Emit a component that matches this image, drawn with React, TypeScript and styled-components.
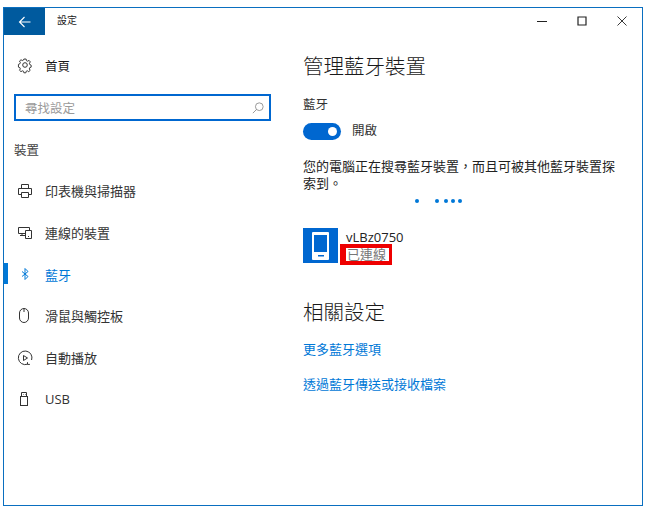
import { FC, ReactNode } from 'react';
import styled, { createGlobalStyle } from 'styled-components';

const GlobalStyle = createGlobalStyle`
  html, body {
    margin: 0;
    padding: 0;
    background: #ffffff;
  }
  body {
    font-family: "Open Sans", "Noto Sans CJK TC", sans-serif;
    color: #1a1a1a;
  }
`;

const Page = styled.div`
  width: 657px;
  height: 514px;
  padding: 7px 0 0 3px;
  box-sizing: border-box;
  overflow: hidden;
`;

const Window = styled.div`
  width: 640px;
  height: 499px;
  box-sizing: border-box;
  border: 1px solid #0a6fc0;
  display: flex;
  flex-direction: column;
`;

const TitleBar = styled.div`
  height: 27px;
  display: flex;
  align-items: center;
  flex-shrink: 0;
`;

const BackButton = styled.div`
  width: 41px;
  height: 27px;
  background: #005a9e;
  display: flex;
  align-items: center;
  justify-content: center;
`;

const TitleText = styled.div`
  margin-left: 12px;
  font-size: 10px;
  line-height: 25px;
  height: 27px;
  flex: 1;
`;

const WindowControls = styled.div`
  display: flex;
  align-items: center;
  gap: 30px;
  padding: 0 15px 2px 0;
`;

const Body = styled.div`
  flex: 1;
  display: flex;
`;

const Sidebar = styled.div`
  width: 299px;
  flex-shrink: 0;
  display: flex;
  flex-direction: column;
`;

const HomeRow = styled.div`
  height: 38px;
  margin-top: 11px;
  display: flex;
  align-items: center;
  padding-left: 12px;
  gap: 11px;
  font-size: 12.5px;
`;

const SearchBox = styled.div`
  margin: 10px 0 0 10px;
  width: 257px;
  height: 27px;
  box-sizing: border-box;
  border: 2px solid #0067d0;
  display: flex;
  align-items: center;
  justify-content: space-between;
  padding: 0 5px 0 9px;
  font-size: 12.5px;
  color: #9a9a9a;
`;

const GroupLabel = styled.div`
  margin: 21px 0 0 10px;
  height: 18px;
  line-height: 18px;
  font-size: 12.5px;
  color: #444444;
`;

const NavList = styled.div`
  margin-top: 10px;
  display: flex;
  flex-direction: column;
`;

const NavRow = styled.div<{ $active?: boolean }>`
  height: 41.7px;
  display: flex;
  align-items: center;
  font-size: 13px;
  color: ${(p) => (p.$active ? '#0078d7' : '#333333')};
  position: relative;
`;

const ActiveMark = styled.div`
  position: absolute;
  left: 0;
  top: 10px;
  width: 4px;
  height: 21px;
  background: #0078d7;
`;

const NavIcon = styled.div`
  width: 41px;
  display: flex;
  justify-content: center;
  align-items: center;
  flex-shrink: 0;
`;

const Content = styled.div`
  flex: 1;
  display: flex;
  flex-direction: column;
  padding-top: 16px;
`;

const Heading = styled.div`
  font-size: 20.5px;
  font-weight: 300;
  line-height: 30px;
  color: #1a1a1a;
`;

const FieldLabel = styled.div`
  margin-top: 15px;
  font-size: 12.5px;
  line-height: 18px;
  color: #333333;
`;

const ToggleRow = styled.div`
  margin-top: 8px;
  display: flex;
  align-items: center;
  gap: 11px;
  font-size: 12.5px;
  line-height: 18px;
  color: #333333;
`;

const ToggleTrack = styled.div`
  width: 38px;
  height: 17px;
  border-radius: 9px;
  background: #0067d0;
  position: relative;
`;

const ToggleKnob = styled.div`
  position: absolute;
  right: 4px;
  top: 4px;
  width: 9px;
  height: 9px;
  border-radius: 50%;
  background: #ffffff;
`;

const Description = styled.div`
  margin-top: 18px;
  width: 317px;
  font-size: 13px;
  line-height: 17px;
  color: #222222;
`;

const ProgressDots = styled.div`
  margin: 6px 0 0 112px;
  height: 5px;
  display: flex;
  align-items: center;
`;

const Dot = styled.span<{ $gap: number }>`
  width: 4px;
  height: 4px;
  border-radius: 50%;
  background: #0078d7;
  margin-right: ${(p) => p.$gap}px;
`;

const DeviceRow = styled.div`
  margin-top: 25px;
  display: flex;
  align-items: flex-start;
  gap: 2px;
`;

const DeviceTile = styled.div`
  width: 35px;
  height: 35px;
  background: #0067d0;
  display: flex;
  align-items: center;
  justify-content: center;
`;

const DeviceInfo = styled.div`
  display: flex;
  flex-direction: column;
  align-items: flex-start;
`;

const DeviceName = styled.div`
  margin-left: 6px;
  font-size: 13px;
  height: 16px;
  line-height: 18px;
  color: #222222;
`;

const DeviceStatus = styled.div`
  border-style: solid;
  border-color: #ee0000;
  border-width: 4px 3px 4px 6px;
  font-size: 13px;
  line-height: 13px;
  height: 13px;
  padding: 0 3px 0 1px;
  color: #777777;
`;

const SectionHeading = styled(Heading)`
  margin-top: 32px;
`;

const TextLink = styled.div<{ $gap: number }>`
  margin-top: ${(p) => p.$gap}px;
  font-size: 13px;
  line-height: 18px;
  color: #0078d7;
`;

const Line: FC<{ children: ReactNode }> = ({ children }) => (
  <svg width={18} height={18} viewBox="0 0 18 18" fill="none" stroke="#333" strokeWidth="1">
    {children}
  </svg>
);

const navItems: { label: string; icon: ReactNode; active?: boolean }[] = [
  {
    label: '印表機與掃描器',
    icon: (
      <Line>
        <path d="M5.5 6.5V2.5h7v4M5 12.5H2.5v-6h13v6H13" />
        <path d="M5.5 10.5h7v5h-7z" />
      </Line>
    ),
  },
  {
    label: '連線的裝置',
    icon: (
      <Line>
        <path d="M9.5 9.5h-7v-6h11v3" />
        <path d="M6 9.5v2M4 11.5h5" />
        <path d="M9.5 6.5h6v8h-6z" />
        <path d="M12 12.5h1" />
      </Line>
    ),
  },
  {
    label: '藍牙',
    active: true,
    icon: (
      <svg width="18" height="18" viewBox="0 0 18 18" fill="none" stroke="#0078d7" strokeWidth="1">
        <path d="M6 6.5l6 5-3 3v-11l3 3-6 5" />
      </svg>
    ),
  },
  {
    label: '滑鼠與觸控板',
    icon: (
      <Line>
        <rect x="3.5" y="1.5" width="9" height="14" rx="4.5" />
        <path d="M8 1.5V5" />
      </Line>
    ),
  },
  {
    label: '自動播放',
    icon: (
      <Line>
        <path d="M11.5 15.2A6.8 6.8 0 1 1 15.6 11" />
        <path d="M7.5 6.5l4 2.5-4 2.5z" />
        <path d="M11.5 13.2v2.2h2.4" />
      </Line>
    ),
  },
  {
    label: 'USB',
    icon: (
      <Line>
        <rect x="4.5" y="6.5" width="7" height="9" />
        <path d="M5.5 6.5v-4h5v4M7 4.5h.5M9 4.5h.5" />
      </Line>
    ),
  },
];

export default function App() {
  return (
    <Page lang="zh-TW">
      <GlobalStyle />
      <Window>
        <TitleBar>
          <BackButton>
            <svg width="14" height="14" viewBox="0 0 14 14" fill="none" stroke="#fff" strokeWidth="1.1">
              <path d="M12.5 7H1.5M6.5 2l-5 5 5 5" />
            </svg>
          </BackButton>
          <TitleText>設定</TitleText>
          <WindowControls>
            <svg width="10" height="10" viewBox="0 0 10 10" fill="none" stroke="#222" strokeWidth="1">
              <path d="M0 5.5h10" />
            </svg>
            <svg width="10" height="10" viewBox="0 0 10 10" fill="none" stroke="#222" strokeWidth="1.2">
              <path d="M1 1h8v8H1z" />
            </svg>
            <svg width="10" height="10" viewBox="0 0 10 10" fill="none" stroke="#222" strokeWidth="0.9">
              <path d="M.5.5l9 9M9.5.5l-9 9" />
            </svg>
          </WindowControls>
        </TitleBar>
        <Body>
          <Sidebar>
            <HomeRow>
              <Line>
                <circle cx="9" cy="9" r="2.3" />
                <path
                  d="M7.6 1.8h2.8l.4 2 1.5.7 1.8-1 1.6 1.9-1.2 1.6.4 1.6 1.8.9v2.4l-1.8.7-.5 1.6 1.1 1.7-1.8 1.7-1.7-1.1-1.5.6-.4 1.9H7.6l-.4-1.9-1.6-.6-1.6 1.1-1.9-1.8 1.1-1.6-.6-1.6-1.8-.7V8.5l1.8-.8.6-1.6-1.1-1.7 1.9-1.7 1.6 1 1.6-.7z"
                  transform="translate(1.8 1.6) scale(.8)"
                  strokeWidth="1.2"
                />
              </Line>
              <span>首頁</span>
            </HomeRow>
            <SearchBox>
              <span>尋找設定</span>
              <svg width="12" height="12" viewBox="0 0 14 14" fill="none" stroke="#8a8a8a" strokeWidth="1">
                <circle cx="8.5" cy="5.5" r="4.5" />
                <path d="M5.5 8.5L1 13" />
              </svg>
            </SearchBox>
            <GroupLabel>裝置</GroupLabel>
            <NavList>
              {navItems.map((item) => (
                <NavRow key={item.label} $active={item.active}>
                  {item.active && <ActiveMark />}
                  <NavIcon>{item.icon}</NavIcon>
                  <span>{item.label}</span>
                </NavRow>
              ))}
            </NavList>
          </Sidebar>
          <Content>
            <Heading>管理藍牙裝置</Heading>
            <FieldLabel>藍牙</FieldLabel>
            <ToggleRow>
              <ToggleTrack>
                <ToggleKnob />
              </ToggleTrack>
              <span>開啟</span>
            </ToggleRow>
            <Description>您的電腦正在搜尋藍牙裝置，而且可被其他藍牙裝置探索到。</Description>
            <ProgressDots>
              <Dot $gap={16} />
              <Dot $gap={5} />
              <Dot $gap={3} />
              <Dot $gap={3} />
              <Dot $gap={0} />
            </ProgressDots>
            <DeviceRow>
              <DeviceTile>
                <svg width="17" height="28" viewBox="0 0 17 28" fill="none">
                  <rect width="17" height="28" rx="1" fill="#fff" />
                  <rect x="2" y="3" width="13" height="17" fill="#0067d0" />
                  <rect x="6" y="23" width="6" height="1.5" fill="#0067d0" />
                </svg>
              </DeviceTile>
              <DeviceInfo>
                <DeviceName>vLBz0750</DeviceName>
                <DeviceStatus>已連線</DeviceStatus>
              </DeviceInfo>
            </DeviceRow>
            <SectionHeading>相關設定</SectionHeading>
            <TextLink $gap={13}>更多藍牙選項</TextLink>
            <TextLink $gap={17}>透過藍牙傳送或接收檔案</TextLink>
          </Content>
        </Body>
      </Window>
    </Page>
  );
}
